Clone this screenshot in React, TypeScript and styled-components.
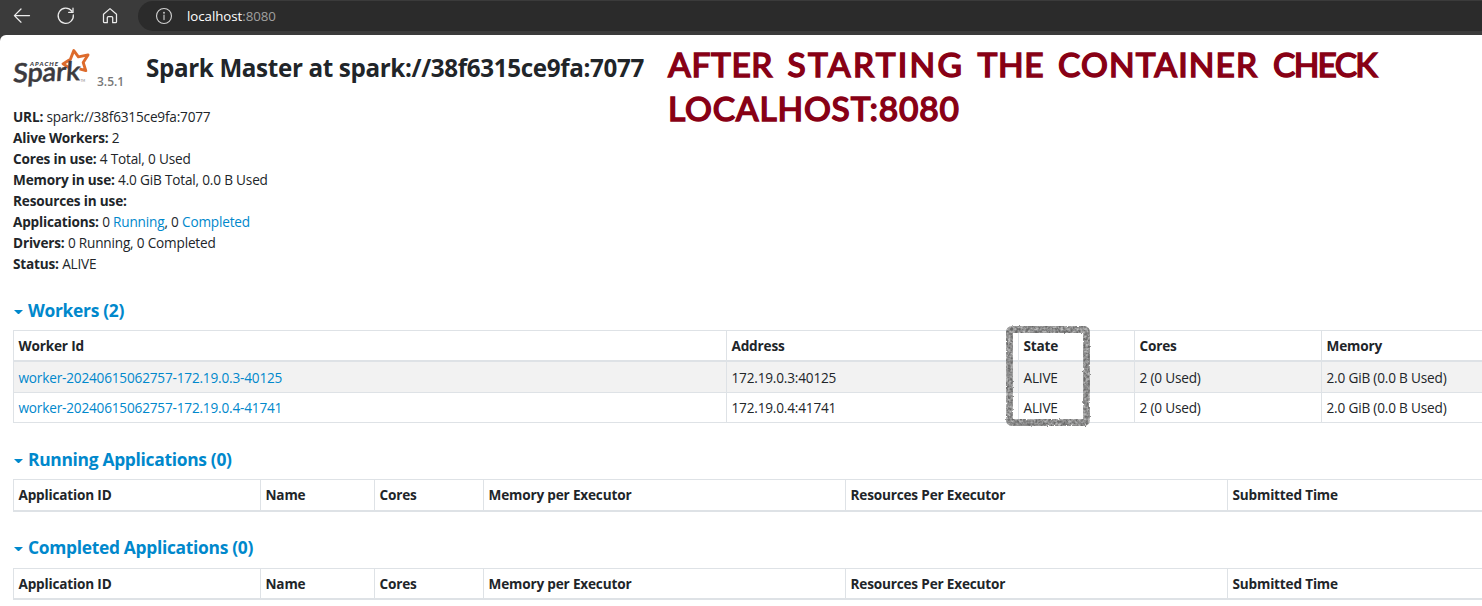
import React from 'react';
import styled, { createGlobalStyle } from 'styled-components';

const GlobalStyle = createGlobalStyle`
  *, *::before, *::after { box-sizing: border-box; }
  html, body { margin: 0; padding: 0; }
  body {
    height: 606px;
    overflow: hidden;
    background: #3b3b3b;
    color: #212529;
    font-family: 'Open Sans', 'Noto Sans', sans-serif;
    font-size: 13.6px;
    letter-spacing: -0.18px;
    line-height: 21px;
  }
`;

const Window = styled.div`
  display: flex;
  flex-direction: column;
  width: 1482px;
  height: 606px;
  overflow: hidden;
`;

const BrowserBar = styled.div`
  display: flex;
  flex: none;
  height: 35px;
  padding-left: 12px;
`;

const NavIcons = styled.div`
  display: flex;
  gap: 24px;
  width: 126px;
  padding-top: 6px;

  svg { flex: none; width: 20px; height: 20px; }
`;

const AddressBar = styled.div`
  display: flex;
  flex: 1;
  align-items: center;
  height: 30px;
  margin-top: 1px;
  padding-left: 17px;
  border-radius: 15px 0 0 15px;
  background: #2b2b2b;
  color: #a0a0a0;
  font-size: 13.3px;
  letter-spacing: -0.05px;

  svg { width: 18px; height: 18px; margin-right: 14px; }
`;

const Host = styled.span`
  color: #fff;
`;

const Page = styled.main`
  position: relative;
  flex: 1;
  padding: 10px 0 0 13px;
  border-top-left-radius: 6px;
  background: #fff;
`;

const Header = styled.header`
  display: flex;
  height: 61px;
`;

const Brand = styled.div`
  display: flex;
  width: 133px;

  svg { display: block; width: 80px; height: 50px; }
`;

const Version = styled.span`
  margin: 26px 0 0 4px;
  color: #777;
  font-size: 12px;
  font-weight: 600;
  letter-spacing: 0;
`;

const Title = styled.h1`
  margin: 7px 0 0;
  font-size: 24.2px;
  font-weight: 700;
  line-height: 32px;
  letter-spacing: -0.35px;
  white-space: nowrap;
`;

const Annotation = styled.div`
  position: absolute;
  top: 7px;
  left: 668px;
  color: #880015;
  font-family: Lato, sans-serif;
  font-size: 33.5px;
  font-weight: 500;
  line-height: 44px;
  -webkit-text-stroke: 1.4px #880015;
  stroke-linejoin: round;
`;

const AnnotationLine = styled.div`
  display: flex;
`;

const Word = styled.span<{ $width: number; $spacing: number }>`
  flex: none;
  width: ${(p) => p.$width}px;
  letter-spacing: ${(p) => p.$spacing}px;
  white-space: nowrap;
`;

const Summary = styled.ul`
  margin: 0;
  padding: 0;
  list-style: none;
`;

const Link = styled.a`
  color: #0088cc;
  text-decoration: none;
`;

const SectionTitle = styled.h4<{ $top: number; $bottom?: number }>`
  display: flex;
  align-items: center;
  height: 21px;
  margin: ${(p) => p.$top}px 0 ${(p) => p.$bottom ?? 9}px;
  color: #0088cc;
  font-size: 17.4px;
  font-weight: 700;
  letter-spacing: -0.3px;
`;

const Caret = styled.span`
  width: 9px;
  margin: 3px 5.5px 0 0.5px;
  border: 4.5px solid transparent;
  border-top-color: #0088cc;
  border-bottom: 0;
`;

const Table = styled.div<{ $columns: string }>`
  display: grid;
  grid-template-columns: ${(p) => p.$columns};
  width: 1600px;
  border: solid #dee2e6;
  border-width: 1px 0 0 1px;
`;

const HeadCell = styled.div<{ $height: number }>`
  height: ${(p) => p.$height}px;
  padding: 4px 4.5px;
  border: solid #dee2e6;
  border-width: 0 1px 2px 0;
  font-weight: 700;
  letter-spacing: -0.18px;
`;

const Cell = styled.div<{ $striped?: boolean }>`
  height: ${(p) => (p.$striped ? 31 : 30)}px;
  padding: ${(p) => (p.$striped ? 5 : 4)}px 4.5px 0;
  border: solid #dee2e6;
  border-width: 0 1px 1px 0;
  background: ${(p) => (p.$striped ? '#f2f2f2' : '#fff')};
`;

const ChalkBox = styled.svg`
  position: absolute;
  top: 286px;
  left: 1001px;
  width: 94px;
  height: 110px;
`;

const SparkLogo = () => (
  <svg viewBox="0 0 80 50">
    <path
      d="M56 22.800 50 18.900 57.400 14.300 60.800 5.600 65.400 11.800 75 9.900 70.200 17.500 72.800 25.600 66.500 23.800"
      fill="none"
      stroke="#dd6b2c"
      strokeWidth="2.900"
      strokeLinejoin="round"
    />
    <text
      transform="translate(-.5 37.600) rotate(-2) skewX(-6)"
      fill="#3c3a3e"
      stroke="#3c3a3e"
      strokeWidth=".4"
      fontFamily="Lato"
      fontSize="26.500"
      fontWeight="600"
      textLength="67"
      lengthAdjust="spacingAndGlyphs"
    >
      Spark
    </text>
    <text
      x="17"
      y="21"
      fill="#3c3a3e"
      fontFamily="Lato"
      fontSize="6.200"
      fontStyle="italic"
      fontWeight="900"
      letterSpacing="1.050"
    >
      APACHE
    </text>
    <text x="67.500" y="37" fill="#77757a" fontFamily="Lato" fontSize="3" letterSpacing="0">TM</text>
  </svg>
);

const lineIcon = {
  viewBox: '0 0 20 20',
  fill: 'none',
  stroke: '#ececec',
  strokeWidth: 1.25,
  strokeLinecap: 'round' as const,
  strokeLinejoin: 'round' as const,
};

const BackIcon = () => (
  <svg {...lineIcon}>
    <path d="M17.5 9.6H2.5M9 3 2.4 9.6 9 16.2" />
  </svg>
);

const ReloadIcon = () => (
  <svg {...lineIcon}>
    <path d="M17.3 8.8A7.6 7.6 0 1 1 15.7 5M17 2.2v4.2h-4.3" />
  </svg>
);

const HomeIcon = () => (
  <svg {...lineIcon}>
    <path d="M3.5 8.3 10 2.6l6.5 5.7v7.4a1 1 0 0 1-1 1h-2.8v-5a1 1 0 0 0-1-1H8.3a1 1 0 0 0-1 1v5H4.5a1 1 0 0 1-1-1z" />
  </svg>
);

const InfoIcon = () => (
  <svg {...lineIcon} stroke="#d0d0d0">
    <circle cx="10" cy="10" r="8.3" />
    <path d="M10 9v5" />
    <circle cx="10" cy="6.4" r=".4" fill="#d0d0d0" />
  </svg>
);

const summary: { label: string; value: React.ReactNode }[] = [
  { label: 'URL:', value: 'spark://38f6315ce9fa:7077' },
  { label: 'Alive Workers:', value: '2' },
  { label: 'Cores in use:', value: '4 Total, 0 Used' },
  { label: 'Memory in use:', value: '4.0 GiB Total, 0.0 B Used' },
  { label: 'Resources in use:', value: '' },
  {
    label: 'Applications:',
    value: (
      <>
        0 <Link>Running</Link>, 0 <Link>Completed</Link>
      </>
    ),
  },
  { label: 'Drivers:', value: '0 Running, 0 Completed' },
  { label: 'Status:', value: 'ALIVE' },
];

const workerHeads = ['Worker Id', 'Address', 'State', 'Cores', 'Memory'];
const workers = [
  { id: 'worker-20240615062757-172.19.0.3-40125', address: '172.19.0.3:40125' },
  { id: 'worker-20240615062757-172.19.0.4-41741', address: '172.19.0.4:41741' },
];

const appHeads = [
  'Application ID',
  'Name',
  'Cores',
  'Memory per Executor',
  'Resources Per Executor',
  'Submitted Time',
];
const appColumns = '247px 114px 109px 362px 382px 1fr';

const ApplicationsTable = ({ height }: { height: number }) => (
  <Table $columns={appColumns}>
    {appHeads.map((head) => (
      <HeadCell key={head} $height={height}>{head}</HeadCell>
    ))}
  </Table>
);

export default function App() {
  return (
    <Window>
      <GlobalStyle />
      <BrowserBar>
        <NavIcons>
          <BackIcon />
          <ReloadIcon />
          <HomeIcon />
        </NavIcons>
        <AddressBar>
          <InfoIcon />
          <Host>localhost</Host>:8080
        </AddressBar>
      </BrowserBar>
      <Page>
        <Header>
          <Brand>
            <SparkLogo />
            <Version>3.5.1</Version>
          </Brand>
          <Title>Spark Master at spark://38f6315ce9fa:7077</Title>
        </Header>
        <Annotation>
          <AnnotationLine>
            <Word $width={119.5} $spacing={0.6}>AFTER</Word>
            <Word $width={190} $spacing={2.3}>STARTING</Word>
            <Word $width={80.5} $spacing={0.6}>THE</Word>
            <Word $width={215} $spacing={1.1}>CONTAINER</Word>
            <Word $width={104} $spacing={-1.7}>CHECK</Word>
          </AnnotationLine>
          <AnnotationLine>
            <Word $width={292} $spacing={0.8}>LOCALHOST:8080</Word>
          </AnnotationLine>
        </Annotation>
        <Summary>
          {summary.map(({ label, value }) => (
            <li key={label}>
              <strong>{label}</strong> {value}
            </li>
          ))}
        </Summary>

        <SectionTitle $top={26}>
          <Caret />
          Workers (2)
        </SectionTitle>
        <Table $columns="713px 292px 116px 187px 1fr">
          {workerHeads.map((head) => (
            <HeadCell key={head} $height={31}>{head}</HeadCell>
          ))}
          {workers.map(({ id, address }, i) => (
            <React.Fragment key={id}>
              <Cell $striped={i === 0}><Link>{id}</Link></Cell>
              <Cell $striped={i === 0}>{address}</Cell>
              <Cell $striped={i === 0}>ALIVE</Cell>
              <Cell $striped={i === 0}>2 (0 Used)</Cell>
              <Cell $striped={i === 0}>2.0 GiB (0.0 B Used)</Cell>
            </React.Fragment>
          ))}
        </Table>

        <SectionTitle $top={26}>
          <Caret />
          Running Applications (0)
        </SectionTitle>
        <ApplicationsTable height={32} />

        <SectionTitle $top={25} $bottom={10}>
          <Caret />
          Completed Applications (0)
        </SectionTitle>
        <ApplicationsTable height={31} />

        <ChalkBox viewBox="0 0 94 110">
          <filter id="chalk" x="-10%" y="-10%" width="120%" height="120%">
            <feTurbulence type="fractalNoise" baseFrequency="0.4" numOctaves="2" seed="4" result="noise" />
            <feDisplacementMap in="SourceGraphic" in2="noise" scale="2.5" result="rough" />
            <feColorMatrix in="noise" type="matrix" values="0 0 0 0 0  0 0 0 0 0  0 0 0 0 0  1.1 0 0 0 0.2" result="grain" />
            <feComposite in="rough" in2="grain" operator="in" />
          </filter>
          <rect x="8.5" y="8.5" width="77" height="93" rx="2" fill="none" stroke="#6b6b6b" strokeWidth="6.8" filter="url(#chalk)" />
        </ChalkBox>
      </Page>
    </Window>
  );
}
